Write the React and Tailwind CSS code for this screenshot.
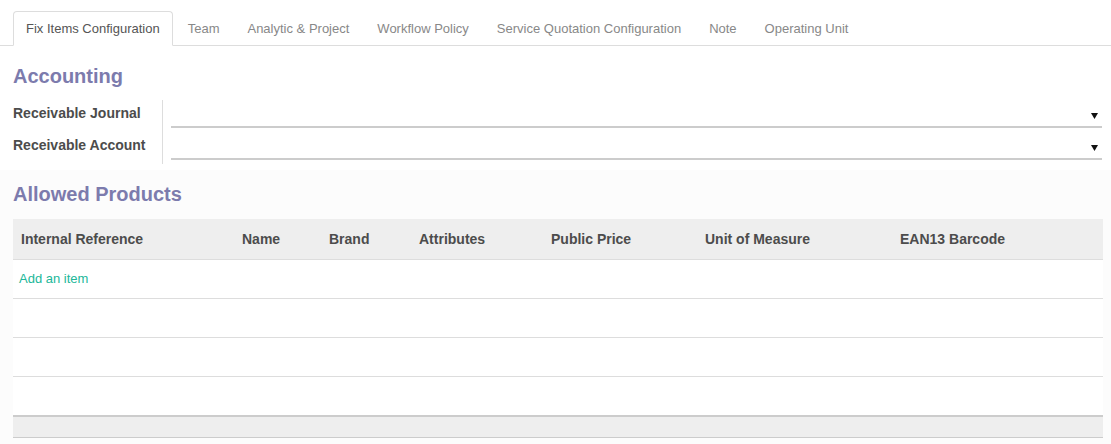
import React from "react";

const tabs = [
  "Fix Items Configuration",
  "Team",
  "Analytic & Project",
  "Workflow Policy",
  "Service Quotation Configuration",
  "Note",
  "Operating Unit",
];

const cols = [
  ["Internal Reference", 221],
  ["Name", 87],
  ["Brand", 90],
  ["Attributes", 132],
  ["Public Price", 154],
  ["Unit of Measure", 195],
  ["EAN13 Barcode", 211],
];

function Caret() {
  return (
    <svg width="7" height="6" viewBox="0 0 7 6" className="mr-[4px]">
      <path d="M0 0H7L3.5 6Z" fill="#111" />
    </svg>
  );
}

function Field({ label }) {
  return (
    <div className="flex h-[32px] items-stretch">
      <div className="w-[150px] flex items-center text-[14px] font-bold text-[#4c4c4c] border-r border-[#dddddd] pb-[5px]">
        {label}
      </div>
      <div className="flex-1 ml-[8px] flex items-start">
        <div className="w-full h-[28px] border-b-2 border-[#cccccc] flex items-center justify-end pt-[5px]">
          <Caret />
        </div>
      </div>
    </div>
  );
}

export default function App() {
  return (
    <div
      className="w-[1111px] h-[444px] bg-white overflow-hidden text-[13px]"
      style={{ fontFamily: '"Liberation Sans", Arial, sans-serif' }}
    >
      <div className="pt-[11px] border-b border-[#dddddd] flex pl-[13px]">
        {tabs.map((t, i) => (
          <div
            key={t}
            className={
              i === 0
                ? "mr-[2px] -mb-px px-[12px] h-[35px] flex items-center border border-[#dddddd] border-b-white rounded-t-[4px] bg-white text-[#555555]"
                : "mr-[2px] -mb-px px-[12px] h-[35px] flex items-center border border-transparent text-[#888888]"
            }
          >
            {t}
          </div>
        ))}
      </div>

      <div className="pl-[13px] pr-[9px] pt-[17px] pb-[6px]">
        <div className="text-[20px] font-bold text-[#7c7bad] leading-[26px]">Accounting</div>
        <div className="mt-[11px]">
          <Field label="Receivable Journal" />
          <Field label="Receivable Account" />
        </div>
      </div>

      <div className="bg-[#fcfcfc] pl-[13px] pr-[8px] pb-[20px]">
        <div className="text-[20px] font-bold text-[#7c7bad] leading-[26px] pt-[11px] pb-[12px]">
          Allowed Products
        </div>
        <div className="bg-white">
          <div className="flex h-[41px] bg-[#eeeeee] border-b border-[#dddddd] items-center">
            {cols.map(([c, w]) => (
              <div
                key={c}
                className="px-[8px] text-[14px] font-bold text-[#4c4c4c]"
                style={{ width: w }}
              >
                {c}
              </div>
            ))}
          </div>
          <div className="h-[39px] border-b border-[#dddddd] flex items-center px-[6px]">
            <span className="text-[13px] text-[#21b799]">Add an item</span>
          </div>
          <div className="h-[39px] border-b border-[#dddddd]" />
          <div className="h-[39px] border-b border-[#dddddd]" />
          <div className="h-[38px]" />
          <div className="h-[23px] bg-[#eeeeee] border-t-2 border-[#cccccc] border-b border-b-[#cccccc]" />
        </div>
      </div>
    </div>
  );
}
